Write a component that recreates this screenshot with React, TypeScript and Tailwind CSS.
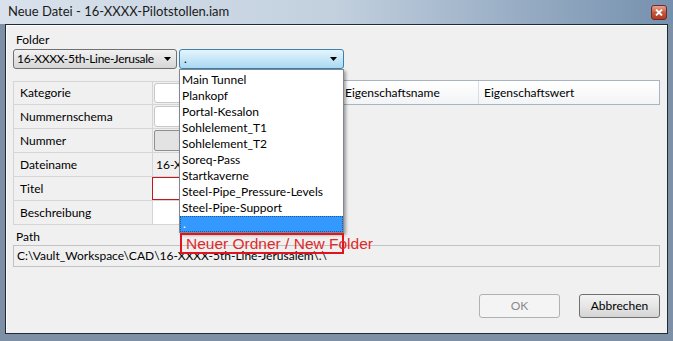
import { ChevronDown } from 'lucide-react';

const ITEMS = [
  'Main Tunnel',
  'Plankopf',
  'Portal-Kesalon',
  'Sohlelement_T1',
  'Sohlelement_T2',
  'Soreq-Pass',
  'Startkaverne',
  'Steel-Pipe_Pressure-Levels',
  'Steel-Pipe-Support',
];

function Arrow() {
  return (
    <svg width="7" height="4" viewBox="0 0 7 4" className="shrink-0">
      <path d="M0 0h7L3.5 4z" fill="#000" />
    </svg>
  );
}

function Row({ label, children, first }: { label: string; children?: React.ReactNode; first?: boolean }) {
  return (
    <div className={`flex h-[24px] border-b border-[#d5d5d5] ${first ? 'border-t' : ''}`}>
      <div className="w-[139px] shrink-0 border-r border-[#d5d5d5] pl-[6px] flex items-center">{label}</div>
      <div className="flex-1 flex min-w-0">{children}</div>
    </div>
  );
}

export default function App() {
  return (
    <div className="w-[673px] h-[341px] flex flex-col bg-[#7d90a5] text-[12px] text-black font-['Lato','Liberation_Sans',sans-serif] overflow-hidden">
      {/* title bar */}
      <div className="h-[24px] flex items-center pl-[8px] pr-[6px] bg-gradient-to-r from-[#d9e2ec] via-[#c2d0de] to-[#7590ae]">
        <span className="flex-1 text-[13px] text-[#1a1a1a]">Neue Datei - 16-XXXX-Pilotstollen.iam</span>
        <div className="w-[16px] h-[15px] rounded-[3px] border border-[#6b2b22] bg-gradient-to-b from-[#e8a493] via-[#c9553c] to-[#b03a25] grid place-items-center">
          <svg width="8" height="7" viewBox="0 0 8 7">
            <path d="M1 0.5l6 6M7 0.5l-6 6" stroke="#fff" strokeWidth="1.8" />
          </svg>
        </div>
      </div>

      <div className="flex-1 pl-[5px] pr-[5px] pb-[7px] flex">
        <div className="relative flex-1 flex flex-col border border-[#1f2a36] bg-[#f0f0f0] shadow-[inset_1px_1px_0_#ffffff] pl-[7px] pr-[7px] pt-[7px]">
          <div className="pl-[3px] leading-[16px]">Folder</div>

          {/* combo row */}
          <div className="flex gap-[2px] h-[20px] mt-[1px]">
            <div className="w-[164px] flex items-center pl-[3px] pr-[5px] gap-[3px] rounded-[3px] border border-[#707070] bg-gradient-to-b from-[#f2f2f2] to-[#d6d6d6]">
              <span className="flex-1 whitespace-nowrap tracking-[-0.3px]">16-XXXX-5th-Line-Jerusale</span>
              <Arrow />
            </div>
            <div className="w-[165px] flex items-center pl-[4px] pr-[6px] rounded-[3px] border border-[#3c7fb1] bg-gradient-to-b from-[#e5f4fc] to-[#a9d9f3]">
              <span className="flex-1">.</span>
              <Arrow />
            </div>
          </div>

          {/* grid area */}
          <div className="flex mt-[12px]">
            <div className="w-[330px] border-l border-[#d5d5d5]">
              <Row label="Kategorie" first>
                <div className="flex-1 m-[1px] rounded-[3px] border border-[#c8c8c8] bg-white" />
              </Row>
              <Row label="Nummernschema">
                <div className="flex-1 m-[1px] rounded-[3px] border border-[#c8c8c8] bg-white" />
              </Row>
              <Row label="Nummer">
                <div className="flex-1 m-[1px] rounded-[2px] border border-[#8e8f8f] bg-[#e3e3e3]" />
              </Row>
              <Row label="Dateiname">
                <div className="flex-1 flex items-center pl-[3px] whitespace-nowrap">16-XXXX-Pilotstollen</div>
              </Row>
              <Row label="Titel">
                <div className="flex-1 border border-[#c4161c] bg-white -ml-px" />
              </Row>
              <Row label="Beschreibung">
                <div className="flex-1 bg-white" />
              </Row>
            </div>
            <div className="flex-1">
              <div className="h-[25px] -mt-px flex border border-[#a7b4c2] bg-gradient-to-b from-white to-[#f3f4f6]">
                <div className="w-[135px] border-r border-[#d6dde5] pl-[1px] flex items-center">Eigenschaftsname</div>
                <div className="flex-1 pl-[5px] flex items-center">Eigenschaftswert</div>
              </div>
            </div>
          </div>

          <div className="pl-[3px] leading-[16px] mt-[4px]">Path</div>
          <div className="h-[22px] border border-[#c2c2c2] bg-[#f0f0f0] flex items-center pl-[3px]">
            C:\Vault_Workspace\CAD\16-XXXX-5th-Line-Jerusalem\.\
          </div>

          <div className="flex justify-end gap-[19px] mt-[27px]">
            <div className="w-[81px] h-[24px] rounded-[3px] border border-[#adb2b5] bg-[#f4f4f4] text-[#8a8a8a] grid place-items-center">OK</div>
            <div className="w-[81px] h-[24px] rounded-[3px] border border-[#707070] bg-gradient-to-b from-[#f2f2f2] via-[#e6e6e6] to-[#d4d4d4] grid place-items-center">Abbrechen</div>
          </div>

          {/* open dropdown list */}
          <div className="absolute left-[173px] top-[44px] w-[165px] border border-[#828790] bg-white pt-[2px] shadow-[2px_2px_3px_rgba(0,0,0,0.35)]">
            {ITEMS.map((it) => (
              <div key={it} className="h-[16px] leading-[16px] pl-[2px] whitespace-nowrap">{it}</div>
            ))}
            <div className="h-[16px] leading-[14px] pl-[2px] bg-[#3399ff] text-white border border-dotted border-[#1a5a9a]">.</div>
          </div>

          {/* annotation */}
          <div className="absolute left-[174px] top-[208px] w-[164px] h-[21px] border-2 border-[#e0141e]">
            <span className="absolute left-[4px] top-[-1px] whitespace-nowrap text-[15.5px] leading-[20px] text-[#e02a2a] font-['Liberation_Sans',sans-serif]">
              Neuer Ordner / New Folder
            </span>
          </div>
        </div>
      </div>
    </div>
  );
}
